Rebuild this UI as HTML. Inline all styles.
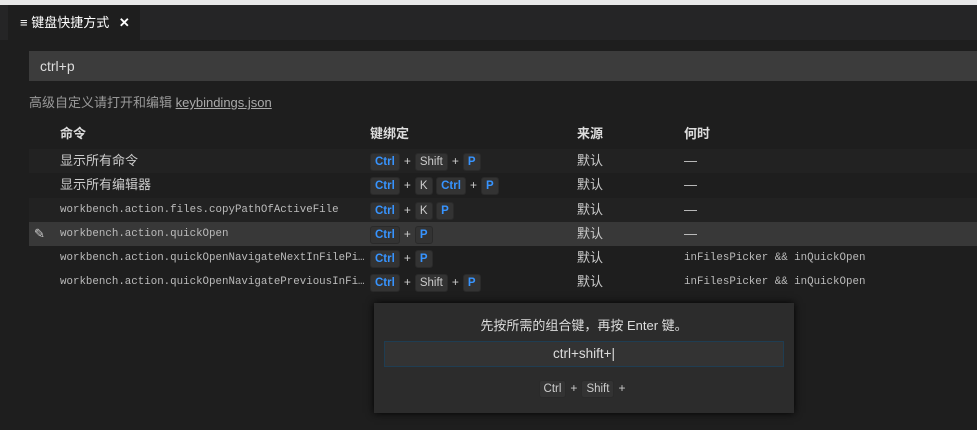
<!DOCTYPE html>
<html><head><meta charset="utf-8"><style>
*{margin:0;padding:0;box-sizing:border-box}
body{width:977px;height:430px;overflow:hidden;background:#1e1e1e;font-family:"Liberation Sans","Noto Sans CJK SC",sans-serif;color:#ccc;font-size:13px;position:relative}
.abs{position:absolute}
.top{left:0;top:0;width:977px;height:5px;background:#e8e8e8}
.tabbar{left:0;top:5px;width:977px;height:35px;background:#252526}
.tab{left:8px;top:5px;width:132px;height:35px;background:#1e1e1e;color:#fff;font-size:13px;line-height:35px;padding-left:12px}
.search{left:29px;top:51px;width:948px;height:30px;background:#3c3c3c;color:#ddd;font-size:14px;line-height:30px;padding-left:11px}
.hint{left:29px;top:92px;color:#999;font-size:13px}
.hint u{color:#aaa}
.row{position:absolute;left:29px;width:948px;height:24px;line-height:24px}
.c1{position:absolute;left:31px;width:310px;overflow:hidden;white-space:nowrap;text-overflow:ellipsis}
.c2{position:absolute;left:341px;top:0}
.c3{position:absolute;left:548px}
.c4{position:absolute;left:655px}
.mono{font-family:"Liberation Mono",monospace;font-size:10.8px;color:#bbb}
.k{display:inline-block;background:#333;border:1px solid #2a2a2a;border-radius:3px;padding:0 4px;height:18px;line-height:17px;font-size:11.5px;color:#ccc;margin-top:3px}
.b{color:#3794ff;font-weight:bold}
.p{margin:0 4px;font-size:12px}
.hd{font-weight:bold;color:#ddd}
.dlg{left:374px;top:303px;width:420px;height:110px;background:#2c2c2c;box-shadow:0 0 8px #000}
</style></head><body>
<div class="abs top"></div>
<div class="abs tabbar"></div>
<div class="abs tab">≡ 键盘快捷方式 <b style="margin-left:6px">✕</b></div>
<div class="abs search">ctrl+p</div>
<div class="abs hint">高级自定义请打开和编辑 <u>keybindings.json</u></div>

<div class="row" style="top:122px"><span class="c1 hd">命令</span><span class="c2 hd" style="left:341px">键绑定</span><span class="c3 hd">来源</span><span class="c4 hd">何时</span></div>
<div class="row" style="top:149px;background:#222"><span class="c1">显示所有命令</span><span class="c2"><span class="k b">Ctrl</span><span class="p">+</span><span class="k">Shift</span><span class="p">+</span><span class="k b">P</span></span><span class="c3">默认</span><span class="c4">—</span></div>
<div class="row" style="top:173px"><span class="c1">显示所有编辑器</span><span class="c2"><span class="k b">Ctrl</span><span class="p">+</span><span class="k">K</span> <span class="k b">Ctrl</span><span class="p">+</span><span class="k b">P</span></span><span class="c3">默认</span><span class="c4">—</span></div>
<div class="row" style="top:198px;background:#222"><span class="c1 mono">workbench.action.files.copyPathOfActiveFile</span><span class="c2"><span class="k b">Ctrl</span><span class="p">+</span><span class="k">K</span> <span class="k b">P</span></span><span class="c3">默认</span><span class="c4">—</span></div>
<div class="row" style="top:222px;background:#383838"><span style="position:absolute;left:5px;color:#ccc">✎</span><span class="c1 mono">workbench.action.quickOpen</span><span class="c2"><span class="k b">Ctrl</span><span class="p">+</span><span class="k b">P</span></span><span class="c3">默认</span><span class="c4">—</span></div>
<div class="row" style="top:246px"><span class="c1 mono">workbench.action.quickOpenNavigateNextInFilePicker</span><span class="c2"><span class="k b">Ctrl</span><span class="p">+</span><span class="k b">P</span></span><span class="c3">默认</span><span class="c4 mono">inFilesPicker &amp;&amp; inQuickOpen</span></div>
<div class="row" style="top:270px"><span class="c1 mono">workbench.action.quickOpenNavigatePreviousInFilePicker</span><span class="c2"><span class="k b">Ctrl</span><span class="p">+</span><span class="k">Shift</span><span class="p">+</span><span class="k b">P</span></span><span class="c3">默认</span><span class="c4 mono">inFilesPicker &amp;&amp; inQuickOpen</span></div>

<div class="abs dlg">
 <div class="abs" style="left:0;top:12px;width:420px;text-align:center;color:#ddd">先按所需的组合键，再按 Enter 键。</div>
 <div class="abs" style="left:10px;top:38px;width:400px;height:26px;background:#333;border:1px solid #1f3d52;text-align:center;line-height:24px;color:#ddd;font-size:13.5px">ctrl+shift+|</div>
 <div class="abs" style="left:0;top:74px;width:420px;text-align:center"><span class="k">Ctrl</span><span class="p">+</span><span class="k">Shift</span><span class="p">+</span></div>
</div>
</body></html>
